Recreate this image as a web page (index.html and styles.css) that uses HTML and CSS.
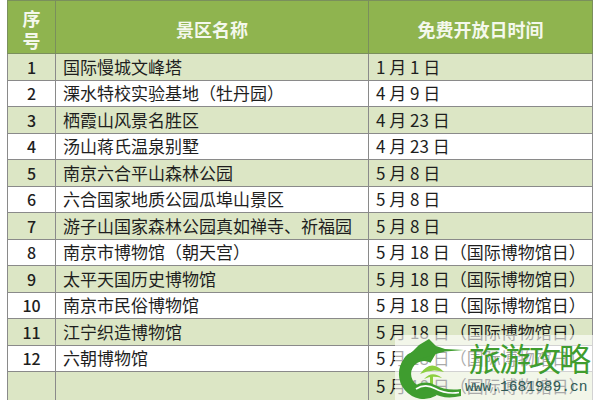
FILE: index.html
```html
<!DOCTYPE html>
<html lang="zh">
<head>
<meta charset="utf-8">
<link rel="stylesheet" href="styles.css">
</head>
<body>
<div class="page">
<table class="tbl">
  <colgroup><col class="c1"><col class="c2"><col class="c3"></colgroup>
  <thead>
    <tr class="head"><th>序<br>号</th><th>景区名称</th><th>免费开放日时间</th></tr>
  </thead>
  <tbody>
    <tr class="alt"><td class="num">1</td><td>国际慢城文峰塔</td><td>1 月 1 日</td></tr>
    <tr><td class="num">2</td><td>溧水特校实验基地（牡丹园）</td><td>4 月 9 日</td></tr>
    <tr class="alt"><td class="num">3</td><td>栖霞山风景名胜区</td><td>4 月 23 日</td></tr>
    <tr><td class="num">4</td><td>汤山蒋氏温泉别墅</td><td>4 月 23 日</td></tr>
    <tr class="alt"><td class="num">5</td><td>南京六合平山森林公园</td><td>5 月 8 日</td></tr>
    <tr><td class="num">6</td><td>六合国家地质公园瓜埠山景区</td><td>5 月 8 日</td></tr>
    <tr class="alt"><td class="num">7</td><td>游子山国家森林公园真如禅寺、祈福园</td><td>5 月 8 日</td></tr>
    <tr><td class="num">8</td><td>南京市博物馆（朝天宫）</td><td>5 月 18 日（国际博物馆日）</td></tr>
    <tr class="alt"><td class="num">9</td><td>太平天国历史博物馆</td><td>5 月 18 日（国际博物馆日）</td></tr>
    <tr><td class="num">10</td><td>南京市民俗博物馆</td><td>5 月 18 日（国际博物馆日）</td></tr>
    <tr class="alt"><td class="num">11</td><td>江宁织造博物馆</td><td>5 月 18 日（国际博物馆日）</td></tr>
    <tr><td class="num">12</td><td>六朝博物馆</td><td>5 月 18 日（国际博物馆日）</td></tr>
    <tr class="alt last"><td class="num"></td><td></td><td>5 月 18 日（国际博物馆日）</td></tr>
  </tbody>
</table>
<div class="mark">
  <svg class="logo" width="66" height="62" viewBox="0 0 66 62">
    <path d="M38.5 14.4 A25 25 0 1 0 38.5 57.6 L32.5 47.3 A13 13 0 1 1 32.5 24.7 Z" fill="#3f9d2f"/>
    <path d="M2 30 Q7 15 13 15 L21 7 L31 1 L38 8 L47 11 L66 12 L47 13.5 L38 16 L22 21 Z" fill="#3f9d2f"/>
    <path d="M22 36 Q33 20 46 34 Q34 30 22 36 Z" fill="#8ccf3f"/>
    <path d="M26 41 Q34 32 44 40 Q34 37 26 41 Z" fill="#8ccf3f"/>
    <rect x="32" y="38" width="3" height="8" fill="#8ccf3f"/>
    <path d="M14 50 Q25 41 37 47 Q48 53 63 51 L63 58 Q46 62 35 55 Q25 49 17 55 Z" fill="#3f9d2f"/>
    <path d="M18 51 Q27 45 37 50.5 Q48 56.5 61 54.5" stroke="#ffffff" stroke-width="1.6" fill="none"/>
  </svg>
  <div class="mark-text">
    <div class="mark-cn">旅游攻略</div>
    <div class="mark-url">www.1681989.cn</div>
  </div>
</div>
</div>
</body>
</html>
```

FILE: styles.css
```css
html, body {
  margin: 0;
  padding: 0;
  background: #ffffff;
}
.page {
  position: relative;
  width: 600px;
  height: 400px;
  overflow: hidden;
  padding-left: 7px;
  box-sizing: border-box;
}
.tbl {
  border-collapse: collapse;
  table-layout: fixed;
  width: 585px;
  font-family: "Noto Sans CJK SC", sans-serif;
  font-size: 17px;
  color: #1e1e1e;
}
.c1 { width: 48px; }
.c2 { width: 313px; }
.c3 { width: 224px; }
.tbl th, .tbl td {
  border: 1px solid #8a8a8a;
  padding: 0 0 0 7px;
  white-space: nowrap;
  overflow: hidden;
  line-height: 20px;
}
.head {
  height: 53px;
  background: #8fb44f;
}
.head th {
  color: #f4f8ec;
  font-weight: bold;
  font-size: 18px;
  line-height: 22px;
  text-align: center;
  padding: 3px 0 0 0;
  border-color: #7a8f5c;
}
.tbl tbody tr {
  height: 26.5px;
  background: #ffffff;
}
.tbl tbody tr.alt {
  background: #dce6c5;
}
.tbl tbody tr.last {
  height: 40px;
  vertical-align: top;
}
.tbl tbody tr.last td {
  padding-top: 4px;
}
.tbl td.num {
  text-align: center;
  padding: 0;
  font-size: 16px;
  font-weight: 500;
}
.mark {
  position: absolute;
  left: 395px;
  top: 335px;
  width: 205px;
  height: 65px;
  background: rgba(255, 255, 255, 0.62);
  display: flex;
  align-items: flex-start;
}
.logo {
  display: block;
  margin: 3px 0 0 3px;
  flex: none;
}
.mark-text {
  margin-left: 1px;
  display: flex;
  flex-direction: column;
}
.mark-cn {
  font-family: "Noto Sans CJK SC", sans-serif;
  font-size: 32px;
  line-height: 44px;
  letter-spacing: -2px;
  color: #3f9d2f;
  padding-left: 4px;
}
.mark-url {
  font-family: "Liberation Mono", monospace;
  font-size: 14.6px;
  line-height: 16px;
  color: #2f5a55;
}
```
